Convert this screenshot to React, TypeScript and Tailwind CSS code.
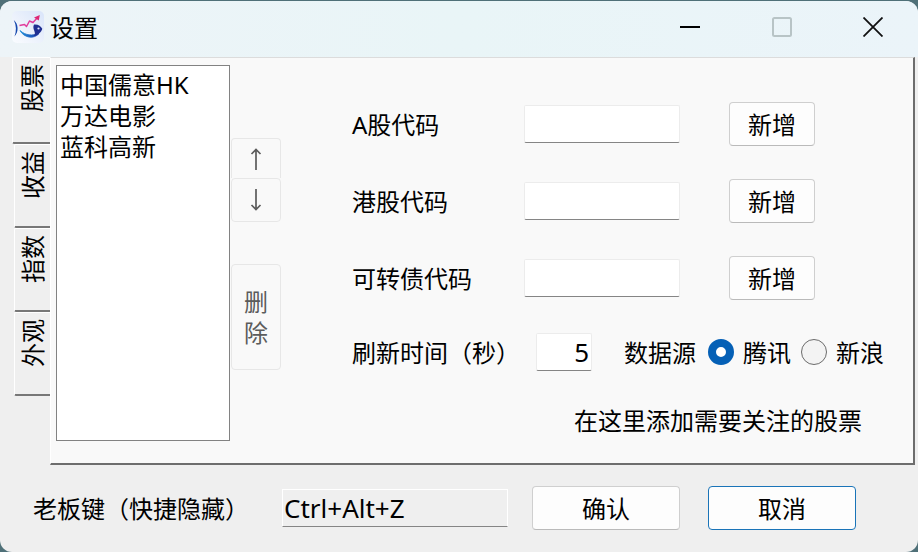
import { useState } from 'react';
import clsx from 'clsx';

const tabs = ['股票', '收益', '指数', '外观'];
const stocks = ['中国儒意HK', '万达电影', '蓝科高新'];
const codeFields = [
    { id: 'a-code', label: 'A股代码' },
    { id: 'hk-code', label: '港股代码' },
    { id: 'bond-code', label: '可转债代码' },
];
const sources = ['腾讯', '新浪'];

const buttonStyle = 'h-11 rounded border border-[#cfcfcf] border-b-[#bababa] bg-[#fdfdfd] text-center';
const inputStyle = 'h-[38px] rounded-xs border border-[#ececec] border-b-[#858585] bg-white px-0.5 text-[26px] outline-none';
const sideButtonStyle = 'w-full rounded border border-[#e7e7e7] bg-[#f9f9f9] text-[#5c5c5c]';

function Logo() {
    return (
        <svg viewBox="0 0 32 32" className="size-8" aria-hidden="true">
            <defs>
                <linearGradient id="tile" x1="1" y1="0" x2="0" y2="1">
                    <stop offset="0" stopColor="#d9e5fa" />
                    <stop offset="0.6" stopColor="#eef3fc" />
                    <stop offset="1" stopColor="#fafcff" />
                </linearGradient>
                <linearGradient id="belly" x1="0" y1="0" x2="1" y2="0">
                    <stop offset="0" stopColor="#1d8fd8" />
                    <stop offset="1" stopColor="#1f3fae" />
                </linearGradient>
            </defs>
            <rect width="32" height="32" rx="5" fill="url(#tile)" />
            <path d="M1.800 9C6.500 13 7 20.500 2.500 25.500C4.500 20 4.500 14.500 1.800 9Z" fill="#1649ae" />
            <path d="M8 19.500C12 27 22 28.500 27 22.500C20.500 25 13.500 24.500 8 19.500Z" fill="url(#belly)" stroke="url(#belly)" strokeWidth="0.800" />
            <path d="M22 13.500C26 13 29 15 30.300 17.800C29.300 21 26.500 24.500 21.500 25C25.500 21.500 19.500 18.500 22 13.500Z" fill="#202f91" />
            <circle cx="26.500" cy="17.500" r="1.100" fill="#dfe6ff" />
            <path d="M7.500 14.500L12.500 13.500L14.500 15.500L17.500 10L21 11.500L26 6" fill="none" stroke="#e13c9c" strokeWidth="1.500" strokeLinejoin="round" />
            <path d="M22 6.500L27.800 4L26.800 9.500Z" fill="#de2774" />
        </svg>
    );
}

function TitleBar() {
    return (
        <header className="flex h-14 shrink-0 items-center bg-linear-to-r from-[#edf4f8] via-[#e9f5f7] to-[#ebf4f9] pb-1 pl-3">
            <Logo />
            <h1 className="ml-1.5">设置</h1>
            <div className="ml-auto flex self-stretch">
                <button type="button" aria-label="最小化" className="flex w-[91px] items-center justify-center">
                    <svg viewBox="0 0 20 20" className="size-5"><path d="M0 10H20" stroke="#000" strokeWidth="2" /></svg>
                </button>
                <button type="button" aria-label="最大化" disabled className="flex w-[93px] items-center justify-center">
                    <svg viewBox="0 0 20 20" className="size-5"><rect x="1" y="1" width="18" height="18" rx="1.500" fill="none" stroke="#b8c4c6" strokeWidth="2" /></svg>
                </button>
                <button type="button" aria-label="关闭" className="flex w-[90px] items-center justify-center">
                    <svg viewBox="0 0 20 20" className="size-5"><path d="M0.500 0.500L19.500 19.500M19.500 0.500L0.500 19.500" stroke="#111" strokeWidth="1.800" /></svg>
                </button>
            </div>
        </header>
    );
}

export default function App() {
    const [tab, setTab] = useState(0);
    const [source, setSource] = useState(sources[0]);

    return (
        <div className="flex min-h-screen flex-col bg-[#4f7078] pt-px font-['Noto_Sans','Noto_Sans_CJK_SC',sans-serif] text-[24px] leading-[31px] text-black">
            <div className="flex flex-1 flex-col overflow-hidden rounded-xl bg-[#efefef]">
                <TitleBar />
                <main className="flex pr-[3px] pl-3">
                    <div role="tablist" aria-orientation="vertical" className="flex w-[38px] shrink-0 flex-col items-end">
                        {tabs.map((name, index) => (
                            <button
                                key={name}
                                type="button"
                                role="tab"
                                aria-selected={tab === index}
                                onClick={() => setTab(index)}
                                className={clsx(
                                    'flex items-start justify-center rounded-l-xs border-t border-b-2 border-l border-t-white border-b-[#777] border-l-white pt-1.5',
                                    tab === index ? 'h-[87px] w-[38px]' : 'h-[84px] w-9',
                                )}
                            >
                                <span className="rotate-180 [text-orientation:sideways] [writing-mode:vertical-rl]">{name}</span>
                            </button>
                        ))}
                    </div>

                    <section className="flex min-w-0 flex-1 border-t border-r-2 border-b-2 border-l border-t-[#dcdcdc] border-r-[#6d6d6d] border-b-[#6d6d6d] border-l-white bg-[#f9f9f9] pt-[7px] pb-[22px] pl-[5px]">
                        <select size={12} aria-label="股票列表" className="h-[376px] w-[174px] shrink-0 appearance-none overflow-hidden rounded-none border border-[#828282] bg-white p-0 outline-none">
                            {stocks.map((name) => (
                                <option key={name} className="h-[31px] p-0 pl-[3px] leading-[31px]">{name}</option>
                            ))}
                        </select>

                        <div className="ml-px flex w-[50px] shrink-0 flex-col pt-[73px]">
                            <button type="button" aria-label="上移" className={clsx(sideButtonStyle, 'flex h-10 items-center justify-center rounded-b-none border-b-0')}>
                                <svg viewBox="0 0 12 22" className="h-[22px] w-3"><path d="M6 22V1.500M1.500 6L6 1.500L10.500 6" fill="none" stroke="#5c5c5c" strokeWidth="1.700" /></svg>
                            </button>
                            <button type="button" aria-label="下移" className={clsx(sideButtonStyle, 'flex h-11 items-center justify-center')}>
                                <svg viewBox="0 0 12 22" className="h-[22px] w-3"><path d="M6 0V20.500M1.500 16L6 20.500L10.500 16" fill="none" stroke="#5c5c5c" strokeWidth="1.700" /></svg>
                            </button>
                            <button type="button" className={clsx(sideButtonStyle, 'mt-[42px] h-[106px] px-3')}>删除</button>
                        </div>

                        <form className="flex min-w-0 flex-1 flex-col pt-[37px] pr-7 pl-[71px]">
                            <div className="flex flex-col gap-[33px]">
                                {codeFields.map((field) => (
                                    <div key={field.id} className="flex items-center">
                                        <label htmlFor={field.id} className="w-[172px]">{field.label}</label>
                                        <input id={field.id} type="text" className={clsx(inputStyle, 'w-[156px]')} />
                                        <button type="button" className={clsx(buttonStyle, 'ml-[49px] w-[86px]')}>新增</button>
                                    </div>
                                ))}
                            </div>
                            <div className="mt-[33px] flex items-center whitespace-nowrap">
                                <label htmlFor="interval" className="w-[184px] shrink-0">刷新时间（秒）</label>
                                <input id="interval" type="text" defaultValue="5" className={clsx(inputStyle, 'w-14 shrink-0 text-right')} />
                                <fieldset className="ml-8 flex items-center">
                                    <legend className="float-left mr-3">数据源</legend>
                                    <div className="flex gap-2.5">
                                        {sources.map((name) => (
                                            <label key={name} className="flex items-center gap-[9px]">
                                                <input
                                                    type="radio"
                                                    name="source"
                                                    checked={source === name}
                                                    onChange={() => setSource(name)}
                                                    className="size-[26px] appearance-none rounded-full border border-[#6b6b6b] bg-[#f3f3f3] checked:border-8 checked:border-[#0560b6] checked:bg-white"
                                                />
                                                {name}
                                            </label>
                                        ))}
                                    </div>
                                </fieldset>
                            </div>
                            <p className="mt-[34px] mr-[23px] text-right">在这里添加需要关注的股票</p>
                        </form>
                    </section>
                </main>

                <footer className="flex items-center py-[21px] pl-[33px]">
                    <label htmlFor="boss-key" className="w-[249px]">老板键（快捷隐藏）</label>
                    <input id="boss-key" type="text" defaultValue="Ctrl+Alt+Z" className="h-[38px] w-[226px] border border-white border-b-[#858585] bg-[#efefef] px-px text-[26px] outline-none" />
                    <button type="button" className={clsx(buttonStyle, 'ml-6 w-[148px]')}>确认</button>
                    <button type="button" className="ml-7 h-11 w-[148px] rounded border border-[#1a74b8] bg-[#fdfdfd] text-center">取消</button>
                </footer>
            </div>
        </div>
    );
}
